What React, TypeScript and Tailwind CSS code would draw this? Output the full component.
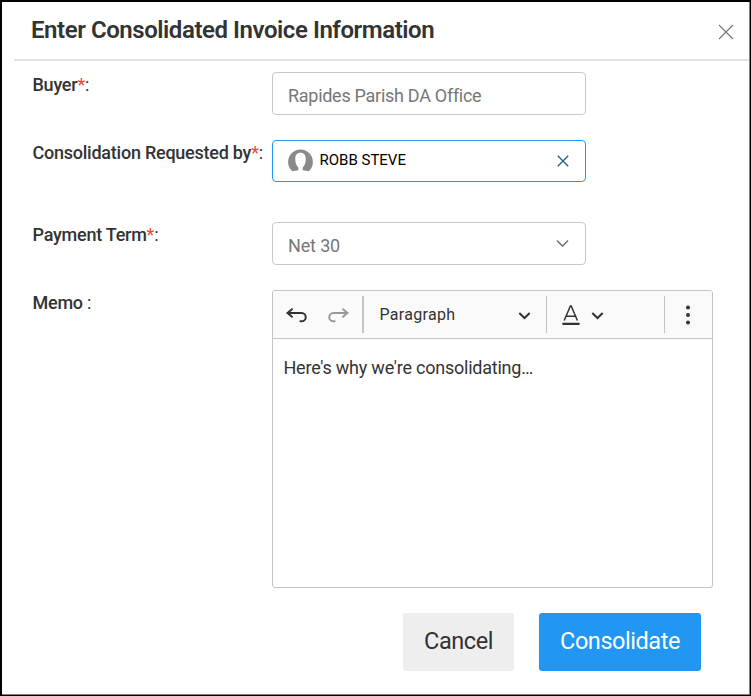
import type { ReactNode } from "react";

type FieldRowProps = {
    label: string;
    required?: boolean;
    suffix?: string;
    className: string;
    children: ReactNode;
};

function FieldRow({ label, required, suffix = ":", className, children }: FieldRowProps) {
    return (
        <div className={`flex items-start ${className}`}>
            <label className="w-[240px] shrink-0 whitespace-nowrap pl-[0.5px] text-[18px] leading-[26px] font-medium tracking-[-0.24px] text-[#333333]">
                {label}
                {required && <span className="font-normal text-[#f44336]">*</span>}
                <span className="font-normal">{suffix}</span>
            </label>
            {children}
        </div>
    );
}

function EditorToolbar() {
    return (
        <div className="flex h-[48px] items-center border-b border-[#c4c4c4] bg-[#fafafa] text-[#333333]">
            {/* undo / redo */}
            <button type="button" className="ml-[12px]" aria-label="Undo">
                <svg width="22" height="18" viewBox="0 0 22 18" fill="none" stroke="currentColor" strokeWidth="2">
                    <path d="M7 3.200 2.500 7 7 10.800M2.500 7H16.600a3.700 3.700 0 0 1 0 8.300h-1.200" strokeLinecap="round" />
                </svg>
            </button>
            <button type="button" className="ml-[21px] text-[#999999]" aria-label="Redo">
                <svg width="22" height="18" viewBox="0 0 22 18" fill="none" stroke="currentColor" strokeWidth="2">
                    <path d="M15 3.200 19.500 7 15 10.800M19.500 7H5.400a3.700 3.700 0 0 0 0 8.300h1.200" strokeLinecap="round" />
                </svg>
            </button>
            <span className="ml-[12px] h-[37px] w-[2px] bg-[#c4c4c4]" />

            {/* heading select */}
            <button type="button" className="flex h-full w-[182px] items-center justify-between pl-[15.5px] pr-[15px]">
                <span className="text-[16px] tracking-[0.3px]">Paragraph</span>
                <span className="mt-[2px]">
                    <Chevron />
                </span>
            </button>
            <span className="h-[37px] w-px bg-[#c4c4c4]" />

            {/* font colour */}
            <button type="button" className="flex h-full w-[117px] items-center pl-[15px]" aria-label="Font colour">
                <svg width="18" height="22" viewBox="0 0 18 22" fill="none" stroke="currentColor">
                    <path d="M2.200 16.500 8.400 2h.8l6.200 14.500M4.200 12.200h9.200" strokeWidth="1.500" />
                    <path d="M1.200 19.800h15.600" strokeWidth="2.200" strokeLinecap="round" />
                </svg>
                <span className="mt-[2px] ml-[11px]">
                    <Chevron />
                </span>
            </button>
            <span className="h-[37px] w-px bg-[#c4c4c4]" />

            <button type="button" className="ml-[20px]" aria-label="Show more items">
                <svg width="6" height="20" viewBox="0 0 6 20" fill="currentColor">
                    <circle cx="3" cy="2.500" r="2" />
                    <circle cx="3" cy="10" r="2" />
                    <circle cx="3" cy="17.500" r="2" />
                </svg>
            </button>
        </div>
    );
}

function Chevron() {
    return (
        <svg width="13" height="10" viewBox="0 0 13 10" fill="none" stroke="currentColor" strokeWidth="2">
            <path d="m1.300 2 5.200 5 5.200-5" />
        </svg>
    );
}

function App() {
    return (
        <div className="h-[696px] w-[751px] overflow-hidden border-t-2 border-l-2 border-r border-b border-black bg-white font-['Roboto',sans-serif]">
            <div className="h-[693px] border-r border-b border-[#808080]">
                {/* header */}
                <header className="ml-[12px] flex h-[59px] items-center justify-between border-b-2 border-[#e4e4e4] pl-[17px] pr-[15px]">
                    <h1 className="-mt-[2px] text-[24px] leading-[28px] font-semibold tracking-[-0.44px] text-[#333333]">
                        Enter Consolidated Invoice Information
                    </h1>
                    <button type="button" className="mt-[3px]" aria-label="Close">
                        <svg width="16" height="16" viewBox="0 0 16 16" stroke="#777777" strokeWidth="1.200">
                            <path d="m1 1 14 14M15 1 1 15" />
                        </svg>
                    </button>
                </header>

                <form className="pl-[30px] pt-[11px]">
                    <FieldRow label="Buyer" required className="h-[68px]">
                        <div className="flex h-[43px] w-[314px] items-center rounded-[4px] border border-[#c8c8c8] pt-[4px] pl-[15px] text-[18px] tracking-[-0.28px] text-[#777777]">
                            Rapides Parish DA Office
                        </div>
                    </FieldRow>

                    <FieldRow label="Consolidation Requested by" required className="h-[82px]">
                        <div className="flex h-[42px] w-[314px] items-center rounded-[4px] border border-[#2196f3] pl-[15px] pr-[16px]">
                            <svg width="25" height="23" viewBox="0 0 25 23" className="-mt-px">
                                <path
                                    fill="#8a8a8a"
                                    d="M4.200 22.200A12.400 12.400 0 1 1 20.800 22.200L14.800 21.200c-.3-1.600-.2-2.600.4-3.400 1.300-1.500 2-3.200 2.400-5.600.6-5-.6-8.400-5.100-8.400S6.800 7.200 7.400 12.200c.4 2.400 1.100 4.100 2.400 5.600.6.800.7 1.800.4 3.400Z"
                                />
                            </svg>
                            <span className="mb-[2px] ml-[6.5px] text-[15px] text-black">ROBB STEVE</span>
                            <button type="button" className="ml-auto" aria-label="Clear">
                                <svg width="12" height="12" viewBox="0 0 12 12" stroke="#265a88" strokeWidth="1.300">
                                    <path d="m.8.8 10.400 10.400M11.200.8.8 11.200" />
                                </svg>
                            </button>
                        </div>
                    </FieldRow>

                    <FieldRow label="Payment Term" required className="h-[68px]">
                        <div className="flex h-[43px] w-[314px] items-center justify-between rounded-[4px] border border-[#c8c8c8] pl-[15px] pr-[16px] text-[#777777]">
                            <span className="pt-[4px] text-[18px] tracking-[-0.15px]">Net 30</span>
                            <svg width="13" height="9" viewBox="0 0 13 9" fill="none" stroke="currentColor" strokeWidth="1.600">
                                <path d="m1 1.500 5.500 5.500 5.500-5.500" />
                            </svg>
                        </div>
                    </FieldRow>

                    <FieldRow label="Memo" suffix=" :" className="h-[298px]">
                        <div className="h-[298px] w-[441px] overflow-hidden rounded-[3px] border border-[#c4c4c4]">
                            <EditorToolbar />
                            <p className="pt-[16px] pl-[10.5px] text-[18px] leading-[26px] tracking-[-0.23px] text-[#333333]">
                                Here's why we're consolidating…
                            </p>
                        </div>
                    </FieldRow>

                    {/* actions */}
                    <div className="mt-[25px] mr-[48px] flex justify-end gap-[25px] text-[23.5px] tracking-[-0.45px]">
                        <button type="button" className="h-[58px] w-[111px] rounded-[3px] bg-[#eeeeee] text-[#333333]">
                            Cancel
                        </button>
                        <button type="button" className="h-[58px] w-[162px] rounded-[3px] bg-[#2196f3] text-white">
                            Consolidate
                        </button>
                    </div>
                </form>
            </div>
        </div>
    );
}

export default App;
